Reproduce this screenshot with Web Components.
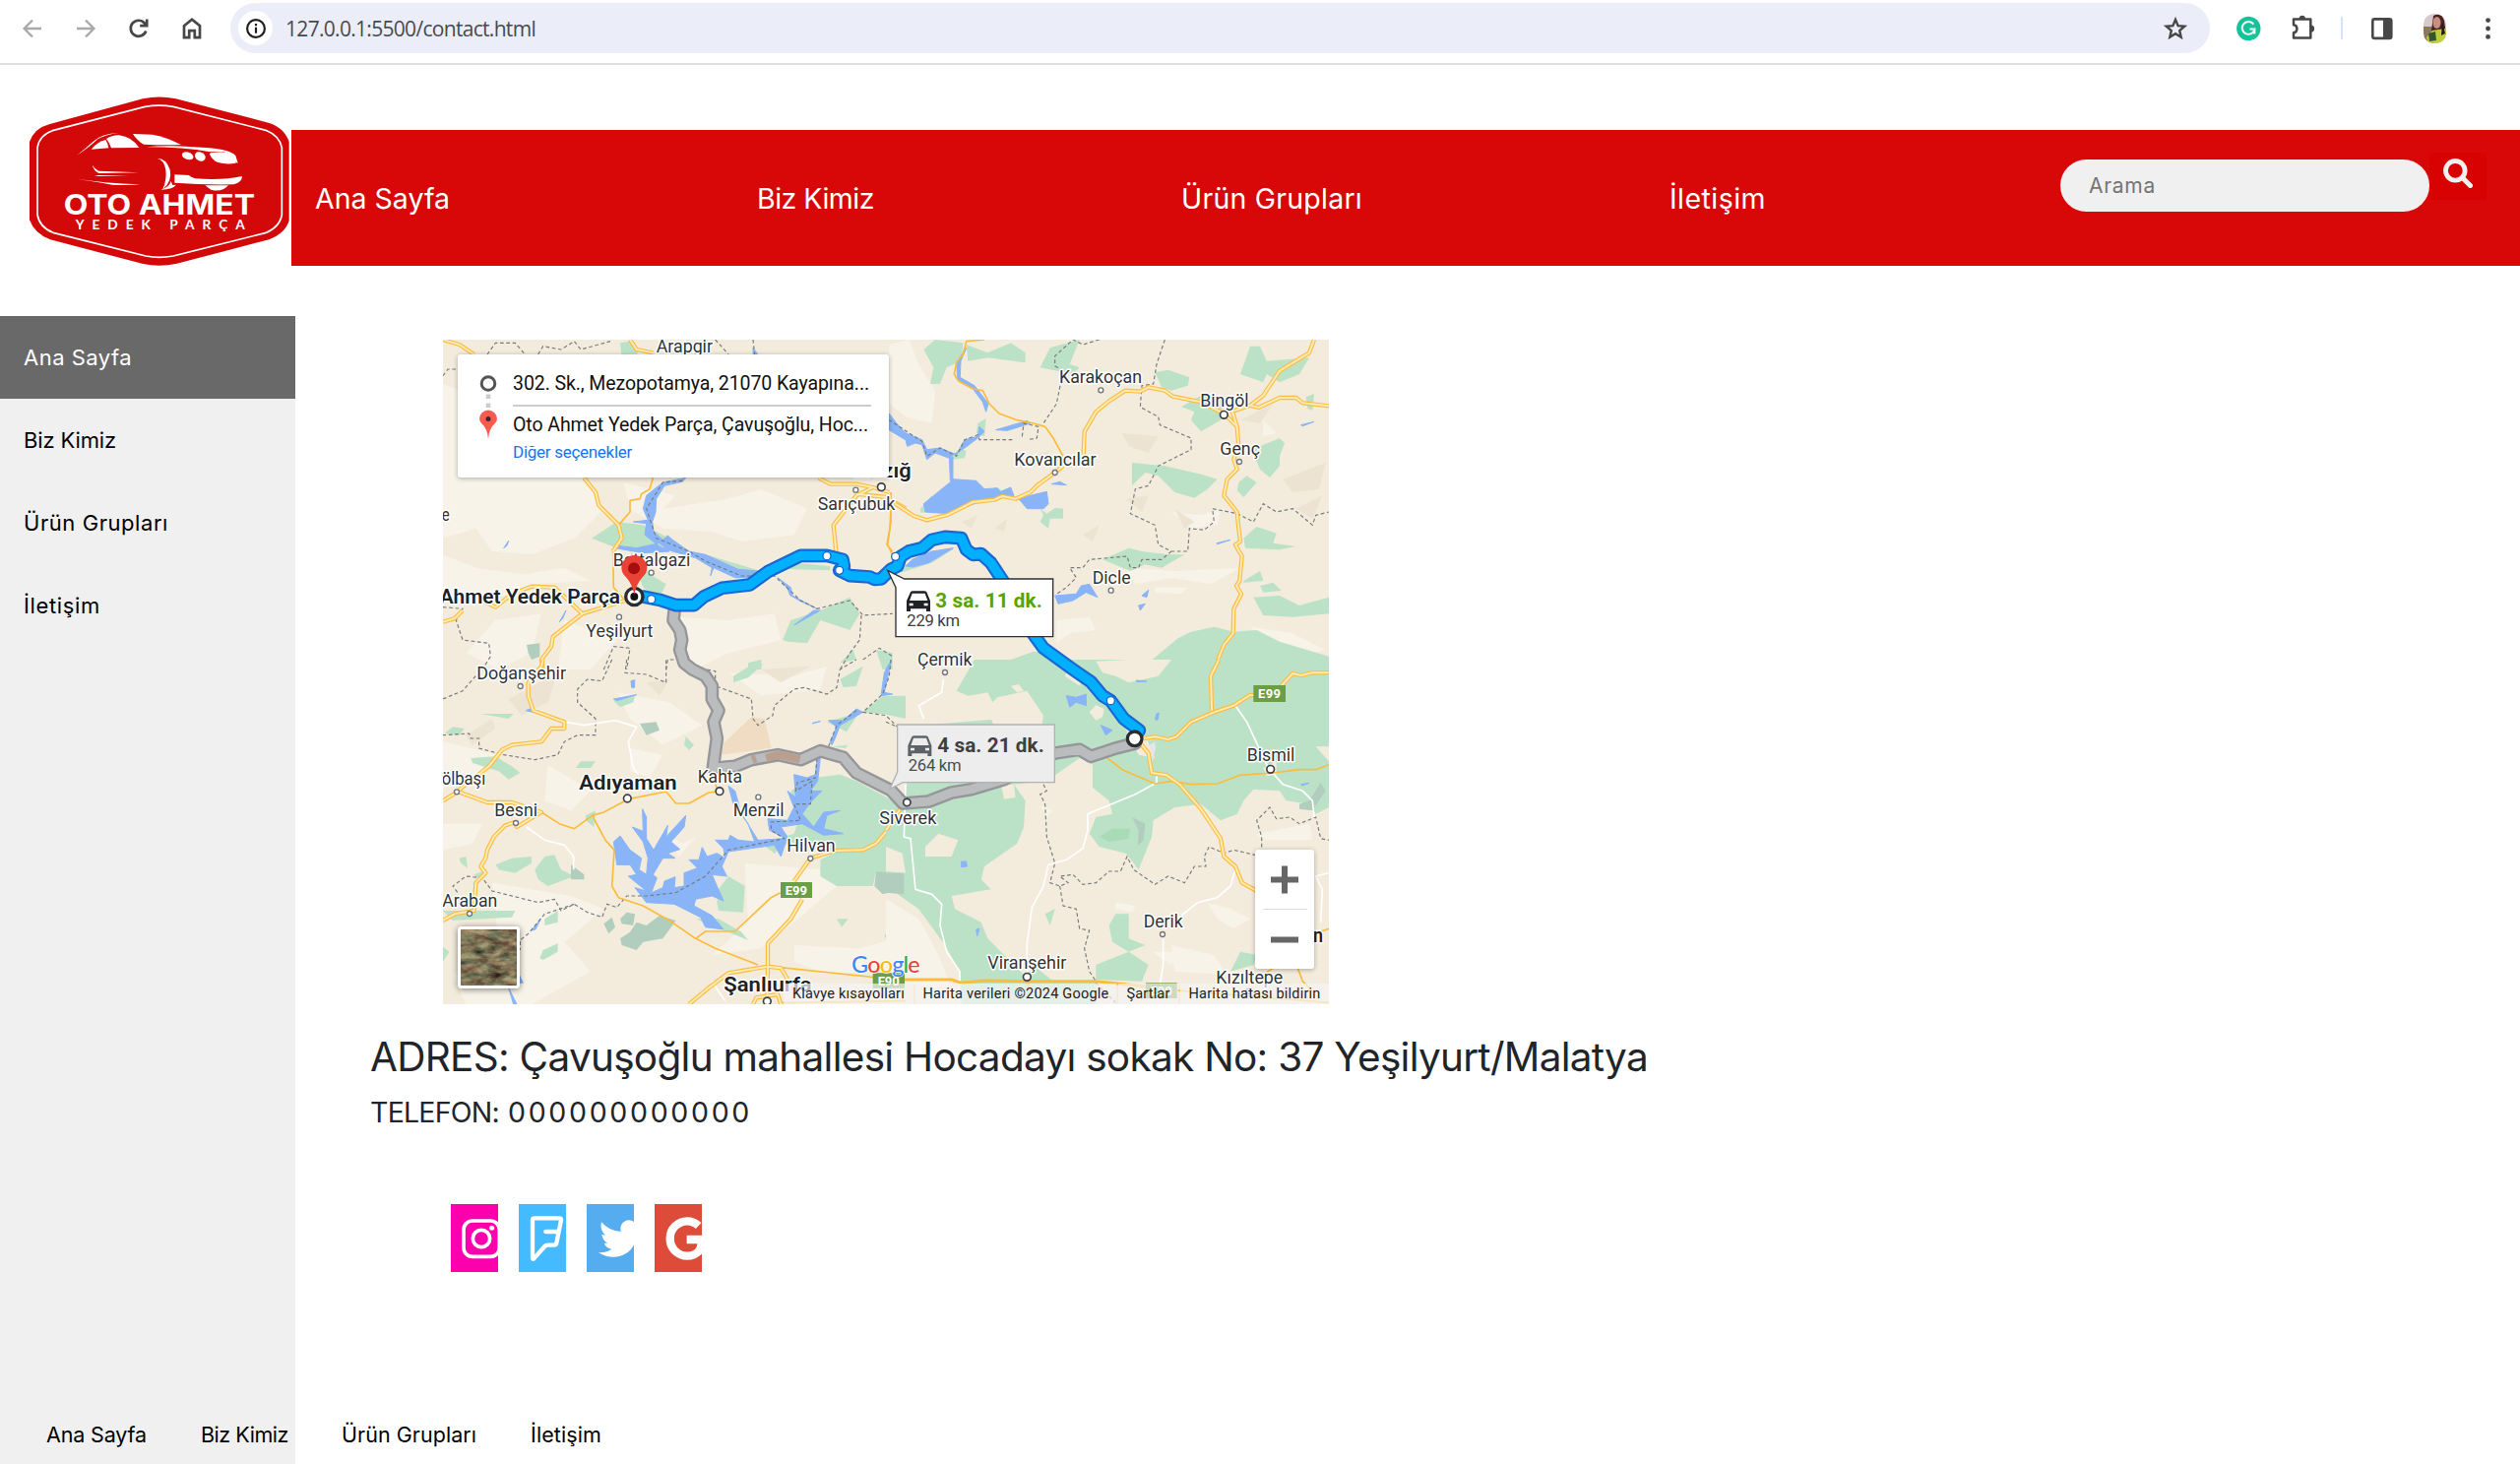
<!DOCTYPE html>
<html lang="tr">
<head>
<meta charset="utf-8">
<title>Oto Ahmet Yedek Parça</title>
<style>
html,body{margin:0;height:100%;background:#fff;font-family:Inter,"Open Sans",sans-serif;color:#212529}
</style>
</head>
<body>
<contact-page></contact-page>
<script>
const define = (name, html, after) => customElements.define(name, class extends HTMLElement {
  constructor() {
    super();
    this.attachShadow({mode: 'open'}).innerHTML = html;
  }
  connectedCallback() { if (after) after(this, this.shadowRoot); }
});

/* Text run that spreads its letters to a given width. */
customElements.define('fit-text', class extends HTMLElement {
  constructor() {
    super();
    this.attachShadow({mode: 'open'}).innerHTML =
      '<style>:host{display:inline-block;white-space:nowrap}</style><slot></slot>';
  }
  connectedCallback() {
    const want = +this.getAttribute('w');
    const have = this.getBoundingClientRect().width;
    if (have) this.style.letterSpacing = ((want - have) / this.textContent.length) + 'px';
    this.style.width = want + 'px';
  }
});

define('browser-bar', `
<style>
:host{display:flex;align-items:center;box-sizing:border-box;height:66px;padding:0 0 7px 21px;border-bottom:2px solid #e0e0e0;background:#fff}
svg{display:block;flex:none;overflow:visible}
.nav{display:flex;gap:30px;margin-right:27px}
.omni{display:flex;align-items:center;box-sizing:border-box;width:2011px;height:51px;border-radius:26px;background:#ebeef8;padding:0 22px 0 8px;margin-right:26px}
.info{width:35px;height:35px;border-radius:50%;background:#fff;display:grid;place-items:center;margin-right:13px}
.url{font:21px "Open Sans","Noto Sans",sans-serif;color:#474a50;flex:1}
.sep{width:2px;height:23px;background:#d3e3fd;margin:0 28px 0 26px}
</style>
<div class="nav">
<svg width="24" height="24" viewBox="0 0 24 24" fill="none" stroke="#a9a9a9" stroke-width="2.4"><path d="M21 12H4.500M12 3.500L3.600 12L12 20.500"/></svg>
<svg width="24" height="24" viewBox="0 0 24 24" fill="none" stroke="#a9a9a9" stroke-width="2.400"><path d="M3 12H19.500M12 3.500L20.400 12L12 20.500"/></svg>
<svg width="24" height="24" viewBox="0 0 24 24" fill="none" stroke="#474747" stroke-width="2.700"><path d="M19.300 14.500A8 8 0 1 1 17.800 6.500L20 9"/><path d="M20.200 2.500V9.200H13.200"/></svg>
<svg width="24" height="24" viewBox="0 0 24 24" fill="none" stroke="#474747" stroke-width="2.700"><path d="M4 9.200L12 2.800L20 9.200V21.200H14.800V14.200H9.200V21.200H4Z"/></svg>
</div>
<div class="omni">
<div class="info"><svg width="22" height="22" viewBox="0 0 22 22"><circle cx="11" cy="11" r="8.900" fill="none" stroke="#1f1f1f" stroke-width="2.200"/><path d="M9.900 9.800h2.200v6h-2.200zM9.900 6h2.200v2.200h-2.200z" fill="#1f1f1f"/></svg></div>
<div class="url"><fit-text w="254">127.0.0.1:5500/contact.html</fit-text></div>
<svg width="26" height="26" viewBox="0 0 26 26" fill="none" stroke="#474747" stroke-width="2.400"><path d="M13 3.900L15.600 10.100L22.300 10.700L17.200 15.100L18.700 21.700L13 18.200L7.300 21.700L8.800 15.100L3.700 10.700L10.400 10.100Z"/></svg>
</div>
<svg width="26" height="26" viewBox="0 0 26 26"><circle cx="13.300" cy="13" r="12.200" fill="#15c39a"/><path d="M18.300 8.600A6.400 6.400 0 1 0 19.400 13.600H14.500M19.300 13.600V18.600" fill="none" stroke="#fff" stroke-width="2"/></svg>
<svg style="margin-left:30px;margin-right:-1px" width="26" height="26" viewBox="0 0 26 26"><path d="M3 3.600H20.300V22.600H3V17.300C7.500 17 7.500 9.600 3 9.300Z" fill="none" stroke="#474747" stroke-width="2.500" stroke-linejoin="round"/><path d="M8.500 3.500a3.300 3.700 0 0 1 6.600 0zM20.500 9.500a3.600 3.600 0 0 1 0 7.200z" fill="#474747"/></svg>
<div class="sep"></div>
<svg width="24" height="24" viewBox="0 0 24 24"><rect x="2.300" y="2.400" width="19" height="19.500" rx="2" fill="none" stroke="#474747" stroke-width="2.600"/><path d="M13 2h8v20h-8z" fill="#474747"/></svg>
<svg style="margin-left:30px" width="23" height="30" viewBox="0 0 23 30"><clipPath id="a"><rect width="23" height="30" rx="10.500"/></clipPath><g clip-path="url(#a)"><path d="M0 0h23v30H0z" fill="#d8c9cf"/><path d="M0 13h10v17H0z" fill="#8b7a5a"/><path d="M10 2q8-4 11 5l2 14-7 2-8-6z" fill="#4a2425"/><ellipse cx="13.500" cy="9" rx="4" ry="6" fill="#c98f7c"/><path d="M9 17l6-1 8-1v9l-5 6H5l-2-6z" fill="#bdd03a"/><path d="M5 20l7-2 1 9-7 1z" fill="#34552d"/><path d="M19 8l3 12-4 2z" fill="#2b1717"/></g></svg>
<svg style="margin-left:38px" width="8" height="24" viewBox="0 0 8 24" fill="#474747"><circle cx="4.500" cy="3.600" r="2.400"/><circle cx="4.500" cy="12" r="2.400"/><circle cx="4.500" cy="20.400" r="2.400"/></svg>
`);

define('brand-logo', `
<style>:host{display:block}svg{display:block}</style>
<svg width="264" height="172" viewBox="30 22 792 516">
<path d="M92 106L375 29Q425 18 476 29L758 102Q806 116 821 160V400Q810 438 760 458L476 532Q425 543 376 532L93 458Q45 440 30 398V160Q45 118 92 106Z" fill="#d30808"/>
<path d="M100 126L382 53Q425 46 468 53L750 125Q792 142 799 178V382Q793 420 748 438L468 508Q425 516 384 508L102 437Q60 420 54 382V178Q60 140 100 126Z" fill="none" stroke="#fff" stroke-width="5"/>
<g fill="#fff">
<path d="M174 201Q200 182 222 161Q250 134 302 133Q260 138 238 152Q205 183 174 201Z"/>
<path d="M218 183Q238 159 262 154Q269 165 271 179Z"/>
<path d="M264 151Q283 139 303 140Q342 145 364 178L279 179Q274 163 264 151Z"/>
<path d="M345 136L405 138Q446 145 492 169Q448 171 378 168Q358 157 345 136Z"/>
<path d="M385 176Q450 169 530 176Q640 180 658 202L665 225L658 222Q650 196 622 191L580 191Q500 176 385 176Z"/>
<ellipse cx="512" cy="203" rx="18" ry="11" transform="rotate(18 512 203)"/><ellipse cx="550" cy="205" rx="17" ry="13" transform="rotate(30 550 205)"/>
<path d="M578 196Q590 190 630 192Q656 198 659 225Q630 231 602 222Q586 215 578 196Z"/>
<path d="M221 230Q230 245 242 249L363 254L242 256Q226 251 221 230ZM228 262L332 262L240 265ZM173 273Q250 285 367 290Q330 294 282 291Q230 281 173 273Z"/>
<path d="M418 210Q447 210 458 245Q466 282 436 305Q449 275 445 245Q440 215 418 210ZM461 280L466 292L476 291Q470 304 430 306Q455 300 461 280Z"/>
<path d="M472 260L516 262Q524 271 536 272Q620 278 678 265Q678 284 652 290Q560 292 472 285ZM565 293L636 293Q615 315 583 306Z"/>
<text x="134" y="382" font-family="Inter,Roboto,sans-serif" font-weight="700" font-size="84" textLength="583" lengthAdjust="spacingAndGlyphs">OTO AHMET</text>
<text x="170" y="427" font-family="Lato,sans-serif" font-weight="700" font-size="41" textLength="516">YEDEK PARÇA</text>
</g></svg>`);

define('site-header', `
<style>
:host{display:flex;padding:32px 0 0 30px;height:223px;box-sizing:border-box}
brand-logo{margin-right:2px;flex:none}
.bar{flex:1;height:138px;margin-top:34px;background:#d90808;display:flex;align-items:center;color:#fff;font-size:28.500px}
.bar a{line-height:36px;margin-top:1px}
.field{box-sizing:border-box;width:375px;height:53px;border-radius:27px;background:#f0f0f0;color:#757575;font-size:21px;line-height:53px;padding-left:29px;margin-top:30px;align-self:flex-start}
.go{width:58px;height:48px;background:#d80202;margin-top:23px;align-self:flex-start;display:grid;place-items:center}
svg{display:block}
</style>
<brand-logo></brand-logo>
<div class="bar">
<a style="margin-left:24px"><fit-text w="137">Ana Sayfa</fit-text></a>
<a style="margin-left:312px"><fit-text w="119">Biz Kimiz</fit-text></a>
<a style="margin-left:312px"><fit-text w="184">Ürün Grupları</fit-text></a>
<a style="margin-left:312px"><fit-text w="98">İletişim</fit-text></a>
<div class="field" style="margin-left:299px"><fit-text w="68">Arama</fit-text></div>
<div class="go"><svg width="30" height="30" viewBox="0 0 30 30" style="margin-top:-6px"><circle cx="12.300" cy="12.300" r="9.800" fill="none" stroke="#f4f0f0" stroke-width="4.800"/><path d="M19.500 19.500L27.500 27.500" stroke="#f4f0f0" stroke-width="5" stroke-linecap="round"/></svg></div>
</div>`);

define('side-menu', `
<style>
:host{display:block;width:300px;background:#f0f0f0;flex:none;color:#000;font-size:22px}
a{display:block;box-sizing:border-box;height:84px;line-height:84px;padding-left:24px}
.on{background:#696969;color:#fff}
</style>
<a class="on"><fit-text w="110">Ana Sayfa</fit-text></a><a><fit-text w="94">Biz Kimiz</fit-text></a><a><fit-text w="147">Ürün Grupları</fit-text></a><a><fit-text w="78">İletişim</fit-text></a>`);

/* Map artwork: four tiles, each listed as [layer class, path data]. */
const tiles = [
 {x:0,y:0,p:[
 ['l','M30 180L200 240 330 380 470 470 520 560 430 650 300 700 180 690 130 620 30 650Z M580 480L740 520 700 560 900 530 1000 500 1140 560 1100 640 940 660 850 630 700 620 600 560Z M30 700L130 740 280 760 400 740 480 780 300 790 150 850 30 830Z M750 890L900 900 1040 880 1060 960 900 1000 800 1050 760 1050Z M190 900L330 880 300 1000 200 1050 100 1000Z M830 560L980 520 1040 570 930 600Z M400 900L560 960 480 1050 380 1050Z'],
 ['g','M483 650L560 600 640 610 740 660 660 690 560 680Z M570 55L600 50 625 80 610 118 575 100Z M600 690L660 760 710 790 690 830 640 800Z M830 700L1000 750 960 775 870 745Z M1040 740L1100 725 1210 735 1210 748 1100 745Z M1065 960L1090 900 1180 870 1270 830 1300 880 1270 930 1180 900 1140 970 1080 965Z M960 1030L1000 1020 1000 1050 960 1050Z M1240 1030L1280 990 1290 1020Z M1350 990L1400 1000 1400 1050 1370 1050Z'],
 ['d','M285 975L325 970 325 1010 300 1020 290 1000Z'],
 ['w','M770 466L700 480 650 520 640 560 655 595 610 600 650 605 645 640 690 675 730 690 800 710 850 740 845 765 855 740 920 770 960 770 990 750 930 745 830 700 780 690 730 655 715 642 700 655 672 630 668 600 678 570 680 530 705 490 760 478Z M555 672L620 680 690 665 720 690 640 695 555 680Z M1390 275L1440 330 1440 350 1390 320Z M975 70L990 90 975 90Z M1100 915L1160 870 1180 870Z M215 680L230 658 225 672Z M385 905L405 870 395 895Z M1050 770L1090 800 1095 825 1170 865 1120 842 1088 824 1080 803Z'],
 ['b','M165 90L190 55 250 55 280 90M320 90L335 65 390 75 430 50 450 75 540 50M30 155L45 135 75 135M975 45L980 90M860 45L900 90M760 475L700 480 650 560 680 650 780 690 830 720 940 765 1040 765 1120 840 1170 865 1270 840 1310 885 1400 880M1305 885L1300 960 1270 1000 1240 1050M30 860L90 865 70 900 90 960 170 970 175 1010 150 1050M520 1050L550 980 600 985 590 1050M710 1050L715 1020 750 1020M1310 1020L1360 985 1400 1010'],
 ['s','M670 466L660 500 635 515 630 530 600 535 600 570 565 610M548 690L550 800 585 840M1395 510L1395 600 1385 670 1400 700'],
 ['r','M30 45L80 60 125 90M600 45L620 75 670 85M460 466L495 510 505 550 565 610 575 650 548 690M585 840L455 880 365 950 360 980 330 1020 335 1050M455 880L370 800 300 797 240 820 190 860 150 840M30 905L65 895 90 870M1175 466L1210 485 1290 485 1340 495 1390 510M1340 495L1290 520 1220 610 1228 690M1290 515L1380 525 1440 560'],
 ]},
 {x:1380,y:0,p:[
 ['l','M10 60L70 45 100 120 150 200 140 300 60 280 10 240Z M870 570L960 580 1020 560 1010 610 930 620Z M730 740L880 750 1080 740 990 790 870 770 760 790Z M520 900L620 890 640 930 560 940 520 970Z M1110 920L1240 940 1340 990 1300 1000 1160 960Z M1150 290L1190 330 1150 340Z M820 800L920 800 900 820 820 815Z'],
 ['m','M230 600L280 580 260 620Z M450 400L500 380 490 410Z M600 640L650 610 630 660Z M730 530L800 520 780 570Z M1080 290L1180 240 1140 300Z M1210 470L1340 420 1320 500 1240 510Z M720 330L830 340 800 390 740 370Z M880 560L940 600 910 620Z M1250 560L1330 520 1300 590Z M330 620L370 590 360 630Z'],
 ['g','M115 75L150 45 235 55 230 110 185 130 165 180 135 180 145 130Z M245 60L310 85 380 55 425 85 425 115 310 100 250 110Z M500 70L590 45 560 120 590 130 570 150 470 130Z M820 145L860 137 925 160 920 185 870 200 840 190Z M1080 150L1110 65 1140 65 1160 110 1290 100 1260 150 1200 175 1160 150 1150 175Z M900 250L960 215 1030 220 1020 290 960 325 930 290 940 265Z M750 420L850 430 960 455 1010 470 980 500 940 527 880 510 830 460 790 450 750 490Z M1115 380L1200 345 1215 360 1200 400 1200 430 1170 465 1140 440Z M1075 480L1100 460 1130 480 1090 525 1070 505Z M1090 650L1130 615 1190 635 1180 665 1250 675 1200 685 1095 680Z M660 715L740 680 780 690 860 700 910 700 840 740 790 730 745 750Z M1090 780L1140 750 1150 780 1090 785Z M1140 795L1180 785 1205 810 1150 815Z M1120 830L1200 825 1260 855 1350 830 1350 880 1240 890 1150 885Z M800 1030L890 955 930 935 1000 920 1060 935 1130 930 1200 965 1350 1010 1350 1050 800 1050Z M340 1035L450 995 500 1000 520 1050 330 1050Z M45 755L60 730 210 680 140 725Z M470 560L490 575 515 558 540 560 540 590 500 590 495 620 470 600 480 580Z M195 400L230 375 245 385 240 405 205 410Z M280 300L305 285 300 340 275 330Z M105 560L140 520 160 570 105 572Z M1280 220L1305 210 1300 260 1285 255Z'],
 ['w','M10 270L50 325 110 350 125 380 165 375 215 395 240 350 280 340 285 310 300 325 280 345 240 375 190 405 150 390 125 410 110 365 90 360 65 370 60 350 10 320Z M193 400L204 402 204 475 196 475Z M115 545L195 480 205 470 275 475 300 500 340 497 350 508 380 495 390 520 310 530 190 575 120 570Z M405 530L440 520 490 508 495 545 480 560 430 560Z M245 70L228 110 226 160 270 185 312 240 305 265 295 235 265 195 218 165 215 115Z M335 320L430 292 440 300 370 322Z M505 485L530 478 550 488Z M1265 305L1305 295 1270 308Z M1008 665L1050 655 1010 668Z M515 825L580 820 595 795 620 790 645 830 610 815 570 840 525 850Z M770 855L790 850 775 870Z M780 825L800 808 795 830Z M60 735L80 715 140 690 205 680 130 725 80 738Z'],
 ['b','M650 45L600 60 570 45 515 95 515 125 540 140 530 190 520 240 480 300M850 45L825 120 815 180 780 185 775 250 830 280 835 305 930 345 930 380 830 430 800 490 760 500 745 575 820 610 830 670 870 690 920 690 925 620 970 625 1000 600 995 560 1070 575 1120 600 1150 545 1190 570 1240 560 1300 610 1310 580 1350 570M415 340L420 300 465 310 460 345 430 350M385 350L285 350 280 335 240 350 215 400 165 375 125 400 110 355 10 290M870 690L840 715 780 715 770 740 745 740 735 705 620 715 600 740 560 740 580 770 550 800 520 820'],
 ['s','M300 45L245 50 235 90 215 115 208 150 220 170 265 195 295 200 315 240 345 270 400 290 450 300 485 310 510 345 540 400M15 560L12 620 3 670 20 690'],
 ['r','M540 430L515 450 460 490 440 510 395 530 355 522 330 533 265 540 190 578 125 595 85 582 28 545M602 395L605 325 640 265 680 232 730 200 775 203 800 190 850 200 875 218 960 235 1030 270 1070 310 1075 370 1060 410 1070 440 1040 470 1030 520 1070 570 1075 620 1080 660 1065 670 1085 705 1078 780 1068 795 1083 820 1060 865 1058 940 1030 975 1000 1050M1060 262L1110 245 1150 215 1200 140 1290 85 1305 45M1110 245L1135 252 1200 222 1250 222 1270 238 1350 247M1055 262L1070 310'],
 ]},
 {x:0,y:1020,p:[
 ['l','M30 250L200 290 100 380 30 390Z M180 680L420 720 520 760 400 860 480 950 300 1050 100 1050 60 960 200 860Z M350 320L480 400 420 460 340 430Z M950 620L1180 640 1230 690 1100 800 1000 880 850 900 960 800Z M560 100L720 130 820 200 700 260 600 180Z M900 40L1100 50 1200 20 1180 90 1000 110Z M690 520L760 560 800 540 750 600Z M1100 870L1300 880 1440 840 1440 940 1200 960 1100 920Z M600 270L700 290 660 360 600 340Z M30 500L150 500 120 560 30 580Z'],
 ['m','M230 120L380 40 350 130 270 170Z M100 230L180 180 190 210 120 260Z M650 70L720 60 690 110Z M1000 30L1150 20 1060 70Z M980 190L1010 185 1000 230Z'],
 ['p','M885 255L970 175 1010 180 1030 270 880 290Z'],
 ['g','M1000 560L1100 530 1120 470 1090 400 1160 360 1240 350 1290 370 1420 440 1440 440 1440 590 1220 600 1180 580 1080 560 1040 590Z M1180 610L1220 590 1440 585 1440 650 1350 645 1340 690 1230 690 1180 660Z M915 50L980 10 1005 15 960 55 915 70Z M550 125L615 110 610 130 570 145Z M145 165L245 165 230 180Z M35 225L60 205 95 210 80 230Z M1240 60L1310 20 1290 80 1250 85Z M1310 160L1370 110 1440 110 1440 180 1370 165Z M115 300L190 295 240 325 265 345 230 365 200 340 120 315Z M435 330L450 310 495 310 480 330Z M765 260L770 235 795 260 780 275Z M190 625L240 605 300 600 300 620 250 650 200 640Z M310 640L340 600 370 595 390 640 430 660 350 690 320 670Z M80 605L100 600 105 635 85 620Z M465 475L495 460 490 510 465 490Z M865 740L870 700 900 660 950 690 945 770 870 765Z M800 790L870 790 940 830 960 855 900 830Z M325 910L335 885 380 865 380 890 335 915Z M340 790L380 765 380 800 340 810Z M30 875L50 890 30 920Z M1230 790L1265 790 1245 815Z M1375 840L1400 820 1410 850 1385 865Z M30 765L250 765 240 785 60 795Z M125 655L165 640 140 670Z M1215 265L1265 260 1255 270Z M690 570L720 555 720 600 690 600Z M1200 190L1300 160 1260 220Z'],
 ['d','M630 195L680 190 690 215 650 230Z M420 625L460 655 460 670 420 670Z M520 805L545 785 555 815 535 835Z M570 790L590 770 615 775 610 810 575 805Z M570 850L600 830 620 800 650 810 690 780 740 795 700 850 640 860 620 885 575 870Z M1350 645L1430 650 1430 700 1370 715 1345 690Z'],
 ['w','M550 555L570 537 600 580 635 605 628 640 650 655 655 605 640 555 607 510 640 523 638 455 650 480 650 545 672 580 715 505 710 540 770 475 765 510 725 555 752 578 715 590 738 605 700 605 670 655 682 665 665 710 700 695 705 675 738 662 735 695 765 690 765 650 805 635 780 610 810 610 820 572 835 600 865 590 890 605 885 575 860 550 900 550 905 535 930 550 980 555 960 500 915 440 900 385 920 400 940 470 990 550 1075 545 1025 520 1020 485 1080 490 1100 450 1080 400 1105 420 1100 350 1140 360 1165 350 1170 300 1180 300 1172 370 1150 400 1185 400 1150 435 1125 470 1160 510 1190 465 1240 460 1200 475 1190 515 1250 530 1190 535 1125 500 1060 510 1080 540 1060 600 1040 565 900 585 880 630 895 660 850 655 865 690 885 735 850 720 800 730 795 750 850 780 885 822 830 815 815 785 735 745 650 740 615 695 650 705 595 660 620 655 600 625 560 625Z M1205 185L1250 185 1290 150 1310 160 1240 200 1225 240 1215 260 1210 250 1230 205Z M1385 20L1397 0 1375 100 1400 105 1365 110 1375 40Z M603 65L614 62 614 85 605 85Z M550 120L620 107 560 125Z M1155 195L1180 188 1160 192Z M300 825L328 790 312 822Z M230 1000L255 1050 245 1050Z M262 960L274 985 262 985Z M283 155L300 148 303 160Z'],
 ['b','M30 120L90 95 130 50M545 0L515 65 470 60 440 90 440 130 495 180 495 230 440 230 400 250 380 290 310 305 215 290 140 270 140 240 115 240 110 225 30 230M590 0L585 40 650 45 710 70 710 0M835 30L860 35 860 80 970 120 975 180 990 200 1035 170 1040 140 1100 90 1130 85 1200 105 1230 85 1240 30 1290 0M1395 0L1390 50 1370 105 1310 160 1380 170 1415 205M1290 155L1230 200 1205 265M1170 300L1165 360 1110 375 1105 400 1155 370 1150 440 1100 440 1120 490 1030 495 1030 520 1070 545 900 580 830 660 740 710 650 720 590 720 560 755 530 745 515 785 470 770 430 745 390 765 370 730 320 740 180 705 150 665 100 660 60 690 75 710M430 745L340 775 290 835 265 855 265 885'],
 ['h','M405 190L460 200 555 185 620 205 595 250 610 330 625 350M285 510L340 550 400 565 428 600 428 640M850 980L890 1040'],
 ['s','M330 465L385 500 430 515 485 475 520 465 595 425 710 402 740 438 780 438 840 405 870 402M860 380L870 402M485 475L525 550 552 580 545 690 565 725 640 750 720 795 800 850 860 880 990 930M800 850L830 828 920 828 1030 725 1058 710M1058 1046L1440 1040M1030 935L1440 978'],
 ['r','M335 0L330 20 290 70 290 110 305 155 400 190 400 210 360 210 330 250 240 260 210 275 170 325 75 400M30 430L75 402 165 435 240 435 330 465 255 510 250 495 220 505 185 540 165 580 160 605 145 630 160 650 130 680 125 765 65 775 30 795M1440 455L1350 560 1310 580 1225 582 1150 605 1100 675M1125 730L1090 790 1020 865 1020 935 1018 1040M780 1050L840 1000 900 955 960 945 1020 935 1060 940 1090 990M975 1050L985 1030 1050 1020 1060 1050'],
 ]},
 {x:1380,y:1020,p:[
 ['g','M270 0L1350 0 1350 450 1310 470 1290 440 1220 430 1200 400 1120 395 1090 430 1070 470 1020 490 960 440 880 450 815 490 810 540 770 640 740 600 730 590 650 570 620 530 640 480 690 470 680 430 630 390 630 320 590 300 490 370 390 380 425 430 420 510 400 560 300 630 290 670 320 700 200 720 210 760 290 800 310 850 420 960 460 940 510 980 640 980 640 1050 230 1050 225 950 180 870 100 760 0 690 0 430 50 430 110 200 350 180 310 100 250 110 215 95Z'],
 ['e','M320 135L340 115 430 95 480 170 470 240 360 270 320 180Z M640 5L740 0 870 0 830 50 740 70 700 50 660 40Z M380 80L405 75 420 95 400 100Z M620 160L640 138 665 150 660 175 640 185Z M545 50L560 20 600 50 590 80Z M120 570L160 530 220 550 200 600 120 600Z M730 210L790 230 820 300 770 290Z M0 570L50 590 60 650 0 645Z M350 380L390 380 395 420 360 425Z M1310 265L1350 265 1350 310Z M1150 330L1190 310 1190 350 1160 355Z'],
 ['g','M680 810L700 775 740 775 740 850 790 870 740 890 690 860Z M640 930L740 890 800 930 780 980 640 975Z M485 775L515 760 500 810Z M1080 890L1130 900 1120 930 1050 950Z'],
 ['l','M1130 530L1290 500 1300 550 1150 550Z M700 740L760 750 750 770 700 760Z M870 870L1000 900 1040 960 880 950Z M980 740L1050 760 1110 790 1060 820 1010 790Z M0 730L100 790 160 900 200 1000 0 980Z M470 445L510 460 490 480Z M810 890L900 890 870 930Z'],
 ['k','M650 540L690 515 745 515 740 545 680 555Z'],
 ['d','M750 480L790 500 785 550 768 568 770 520Z M1260 440L1290 430 1325 375 1340 400 1300 460 1260 455Z M0 650L55 650 55 715 0 710Z'],
 ['u','M803 260L820 250 822 270 812 312Z M790 235L810 240 805 250Z'],
 ['w','M550 110L580 115 610 105 610 140 580 130 560 145Z M655 200L690 215 670 230Z M825 165L832 162 828 184 820 182Z M230 615L245 615 247 630 230 632Z M275 822L285 820 278 842Z M762 63L795 66 765 68Z M1265 380L1290 376 1268 384Z'],
 ['b','M480 380L490 400 470 410 485 440 490 540 515 620 500 680 530 690 555 680 530 660 570 655 600 685 640 680 680 645 715 645 735 600 755 640 820 685 860 660 910 680 940 630 975 630 970 600 985 570 1030 590 1060 580 1145 600 1145 540 1130 490 1170 450 1190 485 1230 480 1260 500 1310 480 1325 545 1350 550M530 690L540 750 580 760 590 820 620 825 605 880 620 950 640 980M0 190L35 205M640 985L700 1045'],
 ['h','M825 355L825 375 760 410 615 470 615 520 600 575 550 610 495 625 480 690 445 755 430 865 430 960M1065 140L1100 190 1165 330 1210 380 1270 400 1300 430 1305 480M60 380L55 540 75 545 90 700 140 715 170 745 165 810 185 890 225 950 225 985M1065 640L1050 690 1010 725 950 740 900 780M845 850L845 930 835 990M175 60L170 100 100 140 115 180M1350 650L1310 660 1330 700 1325 800'],
 ['s','M675 300L720 335 755 350 820 378 870 370 930 380 1010 378 1080 352 1180 345 1260 335 1310 335 1350 320M850 1005L1350 1045M1255 940L1270 980 1300 1010M1150 960L1180 940M1320 830L1350 820'],
 ['r','M785 240L820 235 860 243 885 235 930 190 1000 160 1060 140 1110 108 1130 108M1200 85L1240 42 1265 48 1300 40 1350 40M1015 0L990 50 993 155M775 255L800 285 810 345 855 352 895 380 960 455 1020 545 1030 600 1065 630 1085 680 1130 705M0 520L40 460 60 440'],
 ['q','M0 975L60 975 200 975 230 985 300 978 430 980 640 980 800 997 850 1003M430 985L440 1010'],
 ]},
];
/* Place names: text, left, baseline, width, marker x, marker y, large marker, bold */
const names = [
 ['Arapgir',680,85,172],['Battalgazi',548,735,236,665,755],['Yeşilyurt',466,950,204,567,890],['Sarıçubuk',1172,563,236,1288,503],
 ['Karakoçan',1908,178,252,2035,199],['Bingöl',2338,248,148,2410,274,0,1],['Genç',2398,395,122,2457,417],['Kovancılar',1771,428,250,1895,450],
 ['Dicle',2009,788,117,2066,809],['Çermik',1476,1038,166,1560,1059],['Doğanşehir',133,1080,272,266,1101],['Besni',187,1497,131,252,1518],
 ['Kahta',806,1395,136,873,1421,0,1],['Menzil',914,1498,156,991,1439],['Hilvan',1078,1605,148,1150,1626],['Siverek',1360,1520,174],
 ['Bismil',2480,1328,146,2552,1354,0,1],['Derik',2165,1836,120,2223,1857],['Viranşehir',1690,1963,240,1810,1987,0,1],['Kızıltepe',2386,2007,204,2485,2030],
 ['ölbaşı',26,1402,134,72,1423],['Araban',28,1774,168,111,1794],['e',26,597,24],
 ['Elazığ',1280,465,177,1366,494,1,1],['Adıyaman',445,1415,298,592,1443,1,1],['Şanlıurfa',886,2032,268,1018,2061,1,1],['n',2682,1881,30,null,null,1],
 ['Ahmet Yedek Parça',20,848,550,null,null,1]
];
const tileArt = tiles.map(t => `<g transform="translate(${t.x} ${t.y})">` + t.p.map(([c, d]) =>
  c === 'r' ? `<path class="r1" d="${d}"/><path class="r2" d="${d}"/>` : `<path class="${c}" d="${d}"/>`).join('') + '</g>').join('');
const marks = names.filter(n => n[4] != null).map(n => `<circle cx="${n[4]}" cy="${n[5]}" r="${n[7] ? 11.500 : 7.500}" class="${n[7] ? 'c2' : 'c1'}"/>`).join('');
const labels = names.map(n => `<text x="${n[1]}" y="${n[2]}" textLength="${n[3]}" lengthAdjust="spacingAndGlyphs" class="${n[6] ? 'city' : 'town'}">${n[0]}</text>`).join('');
const blue = 'M640 828L690 838 740 854 795 854 825 828 880 802 965 792 1020 752 1120 703 1200 703 1248 715 1252 735 1238 748 1270 764 1330 768 1345 775 1365 774 1395 745 1415 735 1425 706 1450 690 1490 680 1520 655 1560 646 1610 650 1625 685 1645 700 1670 698 1700 725 1720 755 1740 785 1820 930 1860 985 1950 1050 2005 1088 2040 1130 2065 1145 2105 1200 2152 1235 2138 1258';
const gray = 'M736 865L732 900 752 930 758 960 752 990 765 1030 790 1050 830 1070 850 1100 850 1140 870 1175 855 1210 865 1260 853 1350 885 1348 920 1345 970 1325 1050 1310 1120 1325 1180 1298 1250 1318 1290 1365 1395 1418 1432 1458 1510 1452 1580 1425 1640 1415 1740 1385 1895 1305 1970 1294 2005 1315 2080 1290 2140 1275';
const car = c => `<g fill="${c}"><path fill-rule="evenodd" d="M12 3Q14 0 20 0H53Q59 0 61 3L72 30V62H60V54H12V62H0V30ZM17 7L9 29H64L56 7ZM8 37V45H20V37ZM53 37V45H65V37Z"/></g>`;

define('route-map', `
<style>
:host{display:block;position:relative;width:900px;height:675px;overflow:hidden;background:#f3ebdc;font-family:Roboto,sans-serif}
svg.map{display:block}
.l{fill:#f7f3e8}.m{fill:#ece3d3}.e{fill:#f3ebdc}.g{fill:#bbe2c6}.k{fill:#a9dcb6}.d{fill:#b0cdbd}.p{fill:#efdcc2}.u{fill:#e4e5e8}.w{fill:#8ab4f8;stroke:#8ab4f8;stroke-width:3}
.b{fill:none;stroke:#777b7e;stroke-width:3.500;stroke-dasharray:11 8}
.h{fill:none;stroke:#fff;stroke-width:5}
.s{fill:none;stroke:#fbbc3c;stroke-width:5;stroke-linejoin:round}
.q{fill:none;stroke:#fbbc3c;stroke-width:9}
.r1{fill:none;stroke:#fbbd40;stroke-width:13;stroke-linejoin:round}.r2{fill:none;stroke:#fdeab5;stroke-width:6;stroke-linejoin:round}
.c1{fill:#fff;stroke:#70757a;stroke-width:4}.c2{fill:#fff;stroke:#3c4043;stroke-width:5}
text{font-family:Roboto,sans-serif}
.town{font-size:54px;fill:#303437;stroke:#fff;stroke-width:9;paint-order:stroke;stroke-linejoin:round}
.city{font-size:61px;font-weight:600;fill:#202124;stroke:#fff;stroke-width:9;paint-order:stroke;stroke-linejoin:round}
.sh{font-size:39px;font-weight:700;fill:#fff}
.card{position:absolute;left:15px;top:15px;width:438px;height:125px;box-sizing:border-box;background:#fff;border-radius:3px;box-shadow:0 1px 5px rgba(0,0,0,.3);padding:14px 0 0 22px;display:flex;gap:16px;color:#111;font-size:19.500px}
.rows{width:364px}
.row{height:37px;line-height:32px}
.row+.row{border-top:2px solid #ccc;line-height:38px;height:36px}
.more{color:#1a73e8;font-size:17px;line-height:20px}
.zoom{position:absolute;right:15px;top:518px;width:60px;height:121px;background:#fff;border-radius:3px;box-shadow:0 1px 5px rgba(0,0,0,.3)}
.thumb{position:absolute;left:15px;top:596px;width:57px;height:57px;border:3px solid #fff;border-radius:4px;box-shadow:0 1px 6px rgba(0,0,0,.5);overflow:hidden}
.foot{position:absolute;right:0;bottom:0;height:21px;display:flex;gap:2px;font-size:14.500px;line-height:22px;color:#222}
.foot span{background:rgba(245,245,245,.7);display:block;text-align:center}
</style>
<svg class="map" width="900" height="675" viewBox="30 45 2700 2025">
${tileArt}${marks}
<g fill="none" stroke-linejoin="round" stroke-linecap="round">
<path d="${gray}" stroke="#949699" stroke-width="41"/><path d="${gray}" stroke="#bbbcbe" stroke-width="27"/>
<path d="M972 1324L984 1320M1015 1320L1050 1310 1118 1323" stroke="#ba9f8f" stroke-width="25" stroke-linecap="butt"/>
<path d="${blue}" stroke="#1967d2" stroke-width="41"/><path d="${blue}" stroke="#00b0ff" stroke-width="28"/></g>
<g fill="#fff" stroke="#1967d2" stroke-width="4"><circle cx="665" cy="836" r="12"/><circle cx="1200" cy="704" r="12"/><circle cx="1238" cy="748" r="12"/><circle cx="1409" cy="706" r="12"/><circle cx="2065" cy="1145" r="12"/></g>
<circle cx="1444" cy="1455" r="11" fill="#fff" stroke="#3c4043" stroke-width="5"/>
<circle cx="2138" cy="1261" r="22" fill="#fff" stroke="#2b2c2e" stroke-width="10"/>
${labels}
<circle cx="613" cy="828" r="26" fill="#fff" stroke="#2b2c2e" stroke-width="10"/><circle cx="613" cy="828" r="12" fill="#111"/>
<path d="M613 822Q607 790 588 769Q574 755 574 740A39 38 0 0 1 652 740Q652 755 638 769Q619 790 613 822Z" fill="#ea4335"/><circle cx="612" cy="742" r="18" fill="#a50e0e"/>
<g class="sh"><path fill="#6b9f45" d="M1059 1698h96v48h-96zM2500 1098h98v51h-98zM1340 1975h97v46h-97z"/><path fill="#6b9f45" d="M2172 2005h95v47h-95z"/>
<text x="1073" y="1737" textLength="67">E99</text><text x="2514" y="1138" textLength="69">E99</text><text x="1355" y="2012" textLength="66">E90</text><text x="2186" y="2043" textLength="66">E90</text></g>
<path d="M1385 748L1436 774H1889V950H1410V800Z" fill="#fff" stroke="#303134" stroke-width="4"/>
<g transform="translate(1443 811)">${car('#202124')}</g>
<text x="1531" y="860" font-size="62" font-weight="700" fill="#57a300" textLength="325">3 sa. 11 dk.</text>
<text x="1444" y="917" font-size="50" fill="#3c4043" textLength="161">229 km</text>
<path d="M1392 1414L1415 1362V1218H1894V1394H1432Z" fill="#ededed" stroke="#b0b2b4" stroke-width="4"/>
<g transform="translate(1447 1252)">${car('#5f6368')}</g>
<text x="1537" y="1301" font-size="62" font-weight="700" fill="#3c4043" textLength="325">4 sa. 21 dk.</text>
<text x="1448" y="1358" font-size="50" fill="#4a4d50" textLength="162">264 km</text>
<text x="1275" y="1975" font-size="70" font-weight="500" textLength="209" stroke="#fff" stroke-width="4" paint-order="stroke" style="font-family:Lato"><tspan fill="#4285f4">G</tspan><tspan fill="#ea4335">o</tspan><tspan fill="#fbbc04">o</tspan><tspan fill="#4285f4">g</tspan><tspan fill="#34a853">l</tspan><tspan fill="#ea4335">e</tspan></text>
</svg>
<div class="card">
<svg width="18" height="70" viewBox="0 0 18 70" style="margin-top:6px"><circle cx="9" cy="9.500" r="6.800" fill="#fff" stroke="#555" stroke-width="3"/><path d="M6.800 20.500h4.500v4.500h-4.500zM6.800 29.500h4.500v4.500h-4.500z" fill="#ccc"/><path d="M9 66Q8 55 3 51Q0 48 0 45.500A9 9 0 0 1 18 45.500Q18 48 15 51Q10 55 9 66Z" fill="#f95a50"/><circle cx="9" cy="45.500" r="2.500" fill="#3a2a2a"/></svg>
<div class="rows"><div class="row"><fit-text w="362">302. Sk., Mezopotamya, 21070 Kayapına...</fit-text></div><div class="row"><fit-text w="361">Oto Ahmet Yedek Parça, Çavuşoğlu, Hoc...</fit-text></div><div class="more"><fit-text w="121">Diğer seçenekler</fit-text></div></div>
</div>
<div class="zoom"><svg width="60" height="121" viewBox="0 0 60 121"><path d="M16 27.500h11v-11h6v11h11v6h-11v11h-6v-11h-11zM16 88.500h28v6h-28z" fill="#666"/><path d="M8 60h45v1h-45z" fill="#ddd"/></svg></div>
<div class="thumb"><svg width="57" height="57"><filter id="n" x="0" y="0" width="100%" height="100%" color-interpolation-filters="sRGB"><feTurbulence type="fractalNoise" baseFrequency=".07 .16" numOctaves="4" seed="8"/><feColorMatrix values=".7 .2 0 0 .03  .5 .4 0 0 -.01  .4 .3 0 0 -.02  0 0 0 0 1"/></filter><rect width="57" height="57" filter="url(#n)"/></svg></div>
<div class="foot"><span style="width:132px"><fit-text w="114">Klavye kısayolları</fit-text></span><span style="width:204px"><fit-text w="189">Harita verileri ©2024 Google</fit-text></span><span style="width:61px"><fit-text w="44">Şartlar</fit-text></span><span style="width:151px"><fit-text w="134">Harita hatası bildirin</fit-text></span></div>
`);

define('social-links', `
<style>
:host{display:flex;gap:21px}
svg{display:block;width:48px;height:69px}
</style>
<svg viewBox="24 39 144 207" style="background:#fb00ac"><g fill="none" stroke="#fff" stroke-width="11"><rect x="63" y="90" width="109" height="109" rx="27"/><circle cx="117" cy="144" r="26"/></g><circle cx="149" cy="112" r="7.500" fill="#fff"/></svg>
<svg viewBox="231 39 144 207" style="background:#45bbff"><path d="M279 82H355Q361 82 360 88L346 158Q345 164 339 164H319Q313 164 310 168L279 203Q274 210 273 203V88Q273 82 279 82ZM352 123H313" fill="none" stroke="#fff" stroke-width="13" stroke-linecap="round" stroke-linejoin="round"/></svg>
<svg viewBox="438 39 144 207" style="background:#55acee"><path d="M483 94Q506 121 542 123Q538 101 553 92Q571 82 587 97L604 90V110L592 122Q591 165 562 187Q521 214 474 187Q498 188 514 176Q497 173 491 158H502Q486 150 484 131L495 134Q477 117 483 94Z" fill="#fff"/></svg>
<svg viewBox="648 39 144 207" style="background:#dd4b39"><path d="M782 105Q767 91 747 91Q727 91 711 106Q695 121 695 144Q695 167 711 182Q727 197 747 197Q769 197 782 183Q789 176 791 159L792 147H746" fill="none" stroke="#fff" stroke-width="25"/></svg>
`);

define('footer-nav', `
<style>
:host{position:absolute;left:47px;bottom:15px;display:flex;color:#000;font-size:21.500px;line-height:30px}
</style>
<fit-text w="102">Ana Sayfa</fit-text><fit-text w="89" style="margin-left:55px">Biz Kimiz</fit-text><fit-text w="137" style="margin-left:54px">Ürün Grupları</fit-text><fit-text w="72" style="margin-left:55px">İletişim</fit-text>`);

define('contact-page', `
<style>
:host{display:flex;flex-direction:column;position:relative;width:2560px;height:1487px;overflow:hidden}
site-header{margin-bottom:32px}
.body{display:flex;flex:1}
main{padding:24px 0 0 76px}
route-map{margin-left:74px}
h3{font-weight:400;font-size:40.500px;line-height:50px;margin:29px 0 0}
h5{font-weight:400;font-size:28.500px;line-height:36px;margin:13px 0 0;display:flex;gap:9px}
social-links{margin:75px 0 0 82px}
</style>
<browser-bar></browser-bar>
<site-header></site-header>
<div class="body"><side-menu></side-menu>
<main><route-map></route-map>
<h3><fit-text w="1298">ADRES: Çavuşoğlu mahallesi Hocadayı sokak No: 37 Yeşilyurt/Malatya</fit-text></h3>
<h5><fit-text w="131">TELEFON:</fit-text><fit-text w="248">000000000000</fit-text></h5>
<social-links></social-links></main></div>
<footer-nav></footer-nav>`);
</script>
</body>
</html>
